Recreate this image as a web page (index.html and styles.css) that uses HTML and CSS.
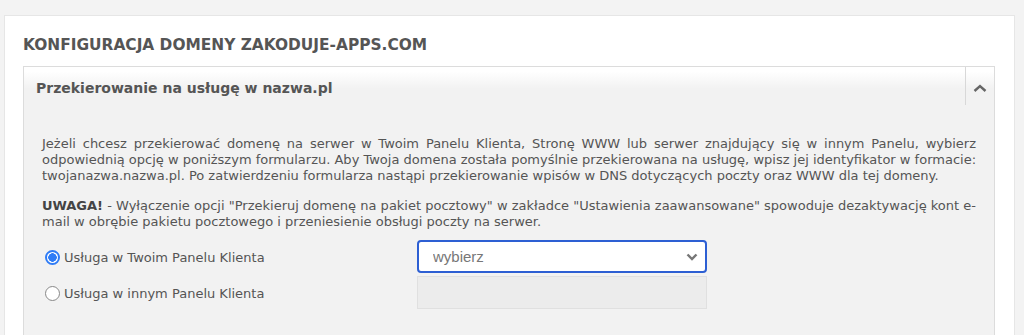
FILE: index.html
```html
<!DOCTYPE html>
<html lang="pl">
<head>
  <meta charset="utf-8" />
  <title>Konfiguracja domeny</title>
  <link rel="stylesheet" href="styles.css">
</head>
<body>
  <div class="card">
    <h1 class="card-title">Konfiguracja domeny zakoduje-apps.com</h1>

    <div class="panel">
      <div class="panel-head">
        <h2>Przekierowanie na usługę w nazwa.pl</h2>
        <button type="button" class="toggle" aria-label="Zwiń">
          <svg width="14" height="8" viewBox="0 0 14 8"><path d="M1.5 7 L7 2 L12.5 7" fill="none" stroke="#666" stroke-width="2.4"/></svg>
        </button>
      </div>

      <div class="panel-body">
        <p>Jeżeli chcesz przekierować domenę na serwer w Twoim Panelu Klienta, Stronę WWW lub serwer znajdujący się w innym Panelu, wybierz odpowiednią opcję w poniższym formularzu. Aby Twoja domena została pomyślnie przekierowana na usługę, wpisz jej identyfikator w formacie: twojanazwa.nazwa.pl. Po zatwierdzeniu formularza nastąpi przekierowanie wpisów w DNS dotyczących poczty oraz WWW dla tej domeny.</p>
        <p><b>UWAGA!</b> - Wyłączenie opcji "Przekieruj domenę na pakiet pocztowy" w zakładce "Ustawienia zaawansowane" spowoduje dezaktywację kont e-mail w obrębie pakietu pocztowego i przeniesienie obsługi poczty na serwer.</p>

        <form class="form">
          <label class="opt"><input type="radio" name="target" checked> Usługa w Twoim Panelu Klienta</label>
          <div class="select-wrap">
            <select class="select">
              <option>wybierz</option>
            </select>
            <svg class="caret" width="12" height="8" viewBox="0 0 12 8"><path d="M1.5 1.5 L6 6 L10.5 1.5" fill="none" stroke="#777" stroke-width="2.4"/></svg>
          </div>
          <label class="opt"><input type="radio" name="target"> Usługa w innym Panelu Klienta</label>
          <input type="text" class="field" disabled>
        </form>
      </div>
    </div>
  </div>
</body>
</html>
```

FILE: styles.css
```css
*{box-sizing:border-box;}
body{margin:0;background:#f3f3f3;color:#555;font-family:"DejaVu Sans",Verdana,sans-serif;}
.card{
  margin:15px 9px 0 4px;
  padding:20px 19px 0 18px;
  background:#fff;
  border:1px solid #e6e6e6;
  border-bottom:none;
  height:320px;
}
.card-title{
  margin:0 0 12px;
  font-size:15.4px;
  line-height:18px;
  font-weight:bold;
  text-transform:uppercase;
  color:#555;
}
.panel{
  border:1px solid #dcdcdc;
  border-bottom:none;
  background:#f2f2f2;
  height:280px;
}
.panel-head{
  display:flex;
  align-items:flex-start;
  height:43px;
  background:linear-gradient(#fff 10%, #f2f2f2 50%);
}
.panel-head h2{
  flex:1;
  margin:0;
  padding:12px 12px 0;
  font-size:14px;
  line-height:18px;
  font-weight:bold;
  color:#555;
}
.toggle{
  width:29px;
  height:38px;
  padding:0;
  border:none;
  border-left:1px solid #d8d8d8;
  background:none;
  display:flex;
  align-items:center;
  justify-content:center;
  cursor:pointer;
}
.toggle svg{margin-top:4px;}
.panel-body{padding:26px 18px 0 18px;}
.panel-body p{
  margin:0 0 14px;
  font-size:13px;
  line-height:16px;
  text-align:justify;
}
.panel-body p b{color:#444;}
.form{
  display:grid;
  grid-template-columns:375px 290px;
  grid-auto-rows:33px;
  row-gap:3px;
  margin-top:-4px;
}
.opt{
  display:flex;
  align-items:center;
  gap:4px;
  font-size:13px;
  color:#555;
  padding:2px 0 0 3px;
}
.opt input{
  appearance:none;
  -webkit-appearance:none;
  width:15px;
  height:15px;
  margin:0;
  border:1px solid #888;
  border-radius:50%;
  background:#fff;
}
.opt input:checked{
  border:2px solid #2f7cf6;
  background:radial-gradient(circle, #2f7cf6 0 4px, #fff 4.5px);
}
.select-wrap{position:relative;}
.select{
  appearance:none;
  -webkit-appearance:none;
  width:100%;
  height:33px;
  padding:0 14px;
  border:2px solid #2d5fd3;
  border-radius:4px;
  background:#fff;
  color:#777;
  font-family:"Liberation Sans",Arial,sans-serif;
  font-size:15px;
}
.caret{position:absolute;right:9px;top:13px;pointer-events:none;}
.field{
  width:100%;
  height:33px;
  border:1px solid #e0e0e0;
  background:#ececec;
}
```
